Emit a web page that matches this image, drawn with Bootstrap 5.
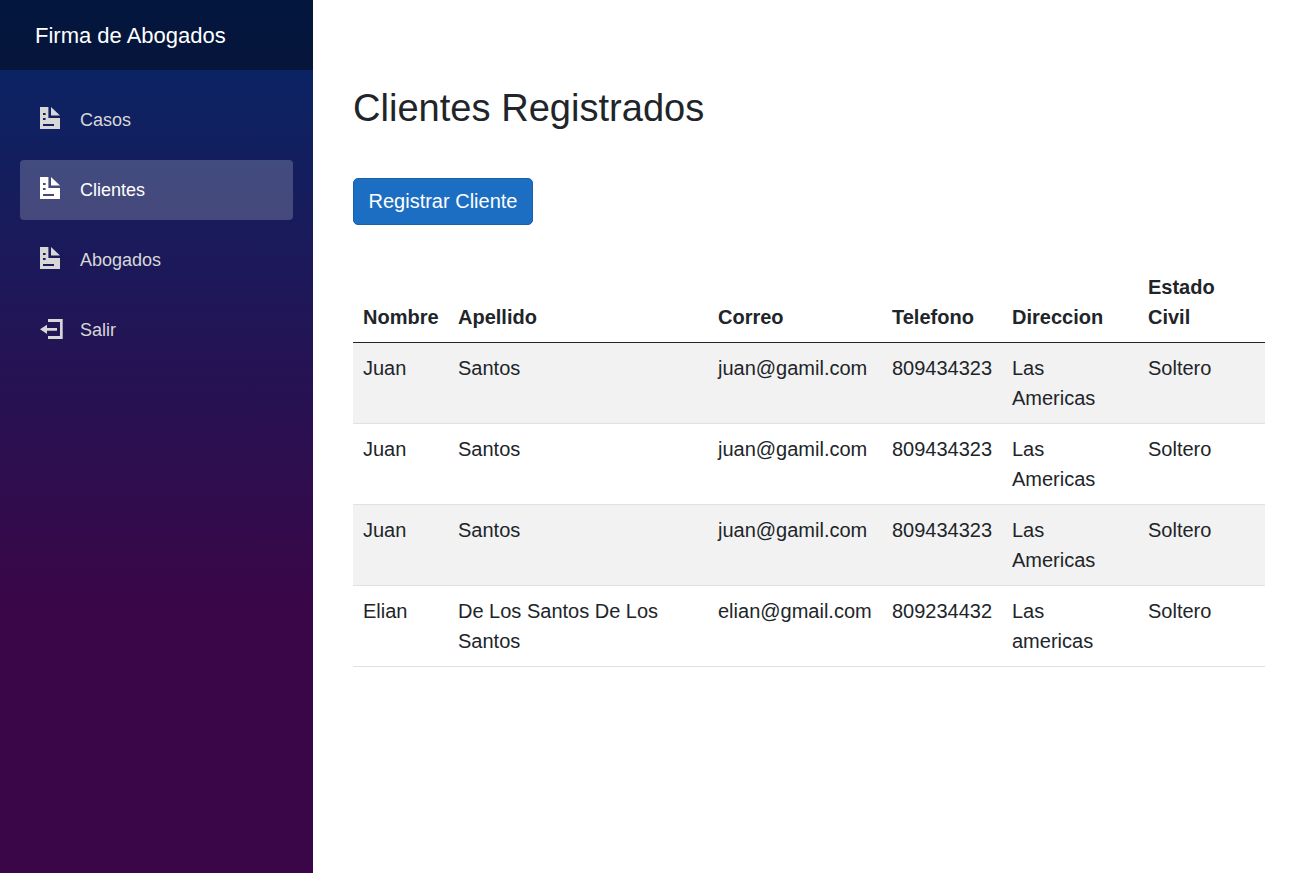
<!DOCTYPE html>
<html lang="es">
<head>
<meta charset="utf-8">
<meta name="viewport" content="width=device-width, initial-scale=1">
<title>Firma de Abogados</title>
<link href="https://cdn.jsdelivr.net/npm/bootstrap@5.3.0/dist/css/bootstrap.min.css" rel="stylesheet">
<style>
  html { font-size: 20px; }
  body { font-family: "Liberation Sans", Arial, sans-serif; }
  .app-sidebar { width: 313px; background-image: linear-gradient(180deg, rgb(5, 39, 103) 0%, #3a0647 70%); }
  .app-topbar { height: 70px; background-color: rgba(0, 0, 0, .4); padding: 0 35px; }
  .app-brand { font-size: 22px; }
  .app-menu { padding: 20px 20px 0; gap: 10px; }
  .app-menu .nav-link { height: 60px; padding: 0 20px; border-radius: 4px; color: #d7d7d7; font-size: 18px; line-height: 58px; }
  .app-menu .nav-link.active { background-color: rgba(255, 255, 255, .2); color: #fff; }
  .app-menu svg { width: 24px; height: 24px; margin: -4px 16px 0 0; fill: currentColor; }
  .app-main { padding: 84px 30px 0 40px; }
  .app-title { font-size: 38.1px; line-height: 48px; }
  .btn-register { --bs-btn-bg: #1b6ec2; --bs-btn-border-color: #1861ac; --bs-btn-color: #fff; --bs-btn-border-radius: 5px; width: 180px; height: 47px; padding: 6.5px 14px 8.5px; margin-top: 46px; }
  .client-table { table-layout: fixed; margin-top: 37px; --bs-table-striped-bg: #f2f2f2; --bs-table-color: #212529; --bs-table-striped-color: #212529; border-color: #dee2e6; }
  .client-table thead th { border-bottom-color: #212529; vertical-align: bottom; }
  .w-nombre { width: 95px; } .w-apellido { width: 260px; } .w-correo { width: 174px; }
  .w-telefono { width: 120px; } .w-direccion { width: 136px; }
</style>
</head>
<body>
<div class="d-flex min-vh-100">
  <aside class="app-sidebar flex-shrink-0">
    <div class="app-topbar d-flex align-items-center"><a class="app-brand text-white text-decoration-none" href="#">Firma de Abogados</a></div>
    <nav class="app-menu nav flex-column">
      <a class="nav-link d-flex align-items-center" href="#"><svg viewBox="0 0 24 24"><path fill-rule="evenodd" d="M0 1h8.4v11H20v11H0zM3 7v2h2.6V7zm0 5v2h2.6v-2zm0 6v2h11v-2zM11 1l9 8.6h-9z"/></svg>Casos</a>
      <a class="nav-link active d-flex align-items-center" href="#"><svg viewBox="0 0 24 24"><path fill-rule="evenodd" d="M0 1h8.4v11H20v11H0zM3 7v2h2.6V7zm0 5v2h2.6v-2zm0 6v2h11v-2zM11 1l9 8.6h-9z"/></svg>Clientes</a>
      <a class="nav-link d-flex align-items-center" href="#"><svg viewBox="0 0 24 24"><path fill-rule="evenodd" d="M0 1h8.4v11H20v11H0zM3 7v2h2.6V7zm0 5v2h2.6v-2zm0 6v2h11v-2zM11 1l9 8.6h-9z"/></svg>Abogados</a>
      <a class="nav-link d-flex align-items-center" href="#"><svg viewBox="0 0 24 24"><path d="M8 3h14.7v20H8v-3h12V6H8zM0 13.3l7-4.6V12h10v2.7H7v3.2z"/></svg>Salir</a>
    </nav>
  </aside>
  <main class="app-main flex-grow-1">
    <h1 class="app-title mb-0">Clientes Registrados</h1>
    <button type="button" class="btn btn-register">Registrar Cliente</button>
    <table class="table table-striped client-table">
      <thead>
        <tr><th class="w-nombre">Nombre</th><th class="w-apellido">Apellido</th><th class="w-correo">Correo</th><th class="w-telefono">Telefono</th><th class="w-direccion">Direccion</th><th>Estado<br>Civil</th></tr>
      </thead>
      <tbody>
        <tr><td>Juan</td><td>Santos</td><td>juan@gamil.com</td><td>809434323</td><td>Las<br>Americas</td><td>Soltero</td></tr>
        <tr><td>Juan</td><td>Santos</td><td>juan@gamil.com</td><td>809434323</td><td>Las<br>Americas</td><td>Soltero</td></tr>
        <tr><td>Juan</td><td>Santos</td><td>juan@gamil.com</td><td>809434323</td><td>Las<br>Americas</td><td>Soltero</td></tr>
        <tr><td>Elian</td><td>De Los Santos De Los<br>Santos</td><td>elian@gmail.com</td><td>809234432</td><td>Las<br>americas</td><td>Soltero</td></tr>
      </tbody>
    </table>
  </main>
</div>
<script src="https://cdn.jsdelivr.net/npm/bootstrap@5.3.0/dist/js/bootstrap.bundle.min.js"></script>
</body>
</html>
